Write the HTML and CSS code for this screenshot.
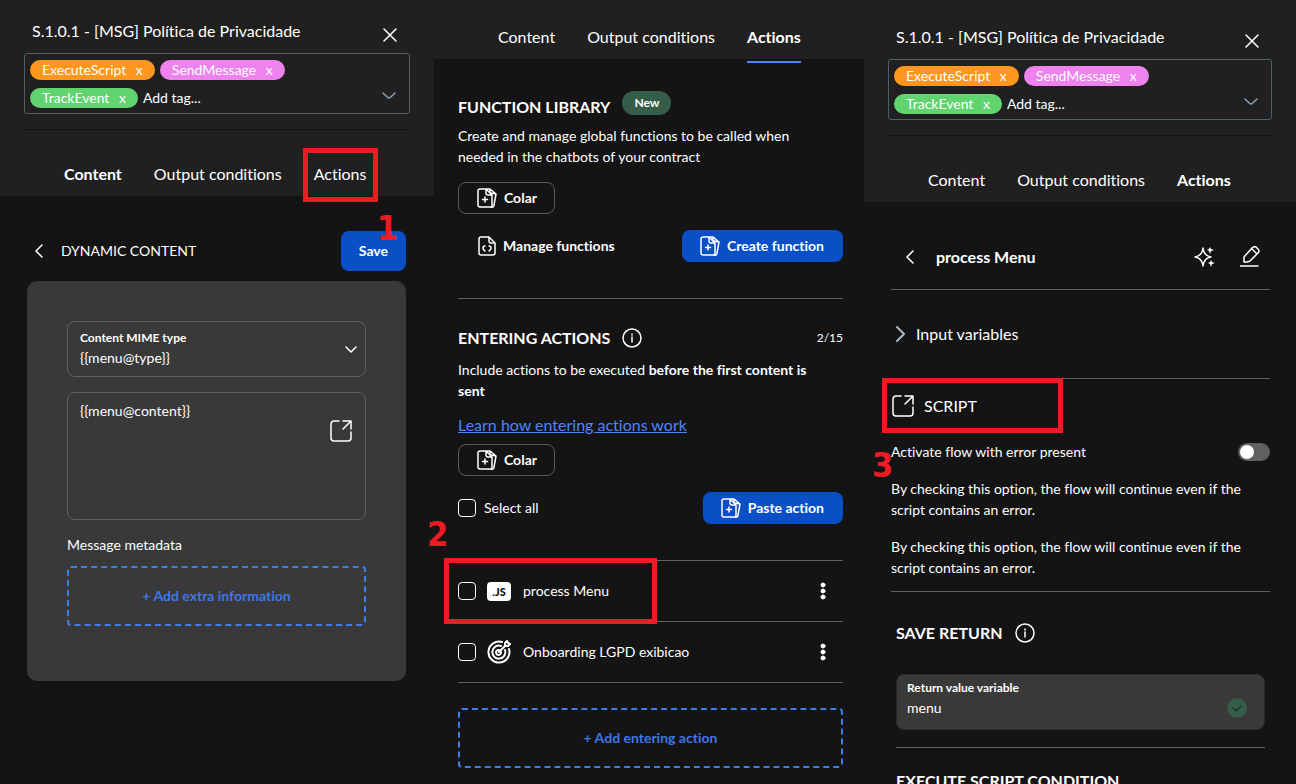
FILE: index.html
```
<!DOCTYPE html>
<html lang="en">
<head>
    <meta charset="UTF-8">
    <title>S.1.0.1 - [MSG] Política de Privacidade</title>
    <link rel="stylesheet" href="styles.css">
</head>
<body>
    <!-- Icons used on the page -->
    <svg class="sprite" aria-hidden="true">
        <symbol id="close" viewBox="0 0 14 14"><path d="M1 1l12 12M13 1L1 13"/></symbol>
        <symbol id="down" viewBox="0 0 14 8"><path d="M1 1q5 5 6 5t6-5"/></symbol>
        <symbol id="chevron" viewBox="0 0 12 8"><path d="M1 1l5 5 5-5"/></symbol>
        <symbol id="back" viewBox="0 0 8 14"><path d="M7 1L1 7l6 6"/></symbol>
        <symbol id="right" viewBox="0 0 10 16"><path d="M1 1l7 7-7 7"/></symbol>
        <symbol id="expand" viewBox="0 0 22 22"><path d="M9 1H4a3 3 0 0 0-3 3v14a3 3 0 0 0 3 3h14a3 3 0 0 0 3-3v-6M13 1h8v8M20 2l-7 7"/></symbol>
        <symbol id="paste" viewBox="0 0 20 20"><path d="M9 1H3a2 2 0 0 0-2 2v14a2 2 0 0 0 2 2h10a2 2 0 0 0 2-2V7L9 1v4a2 2 0 0 0 2 2h4M8 9v5M5.5 11.500h5M9 1h4l6 5-2 11a2 2 0 0 1-3 2M13 1v3a1 1 0 0 0 1 1l5 1"/></symbol>
        <symbol id="code-file" viewBox="0 0 18 20"><path d="M11 1H3a2 2 0 0 0-2 2v14a2 2 0 0 0 2 2h12a2 2 0 0 0 2-2V7zM11 1v4a2 2 0 0 0 2 2h4M7 10q-2 0-2 2t2 3M11 10q2 0 2 2t-2 3"/></symbol>
        <symbol id="info" viewBox="0 0 20 20"><circle cx="10" cy="10" r="9"/><path d="M10 9v5M10 6v1"/></symbol>
        <symbol id="target" viewBox="0 0 24 24"><path d="M15 2A10.500 10.500 0 1 0 22 9M14 6A6.500 6.500 0 1 0 18 10M12 10a2.500 2.500 0 1 0 2 2M12 12l6-6M18 6V3l2-2 1 2 2 1-2 2z"/></symbol>
        <symbol id="sparkle" viewBox="0 0 22 22"><path d="M9 2q1 8 8 9-7 1-8 9-1-8-8-9 7-1 8-9z"/><path class="fill" d="M16 1l1 2 3 1-3 1-1 3-1-3-2-1 2-1zM17 14l1 2 3 1-3 1-1 3-1-3-2-1 2-1z"/></symbol>
        <symbol id="edit" viewBox="0 0 20 21"><path d="M0 20h18M4 11l8-9q2-2 4-1l2 2q2 2 0 4l-8 8q-1 1-6 1 0-4 0-5zM12 3l5 5"/></symbol>
        <symbol id="dots" viewBox="0 0 6 18"><circle cx="3" cy="3" r="2"/><circle cx="3" cy="9" r="2"/><circle cx="3" cy="15" r="2"/></symbol>
    </svg>

    <div class="panels">
        <!-- Content -->
        <section class="panel">
            <header class="header">
                <div class="top">
                    <h1>S.1.0.1 - [MSG] Política de Privacidade</h1>
                    <button class="close" aria-label="Close"><svg width="14" height="14"><use href="#close"/></svg></button>
                </div>
                <div class="tags">
                    <span class="tag orange">ExecuteScript <button aria-label="Remove ExecuteScript">x</button></span>
                    <span class="tag pink">SendMessage <button aria-label="Remove SendMessage">x</button></span>
                    <span class="tag green">TrackEvent <button aria-label="Remove TrackEvent">x</button></span>
                    <input type="text" placeholder="Add tag..." aria-label="Add tag">
                    <svg class="caret" width="14" height="8"><use href="#down"/></svg>
                </div>
                <nav class="tabs line">
                    <a href="#" class="active">Content</a>
                    <a href="#">Output conditions</a>
                    <a href="#">Actions<span class="box box1"></span></a>
                </nav>
            </header>
            <div class="body1">
                <div class="row">
                    <button class="back" aria-label="Back"><svg width="8" height="14"><use href="#back"/></svg></button>
                    <h2 class="dynamic">DYNAMIC CONTENT</h2>
                    <button class="btn blue save">Save<span class="num num1">1</span></button>
                </div>
                <div class="card">
                    <div class="field">
                        <label for="mime">Content MIME type</label>
                        <select id="mime"><option>{{menu@type}}</option></select>
                        <svg class="arrow" width="12" height="8"><use href="#chevron"/></svg>
                    </div>
                    <div class="area">
                        <textarea aria-label="Content">{{menu@content}}</textarea>
                        <button class="expand" aria-label="Expand"><svg width="22" height="22"><use href="#expand"/></svg></button>
                    </div>
                    <p class="meta">Message metadata</p>
                    <button class="add">+ Add extra information</button>
                </div>
            </div>
        </section>

        <!-- Actions -->
        <section class="panel">
            <header class="header">
                <nav class="tabs short">
                    <a href="#">Content</a>
                    <a href="#">Output conditions</a>
                    <a href="#" class="active under">Actions</a>
                </nav>
            </header>
            <div class="body2">
                <div class="library">
                    <h2>FUNCTION LIBRARY</h2>
                    <span class="badge">New</span>
                </div>
                <p class="text">Create and manage global functions to be called when needed in the chatbots of your contract</p>
                <button class="btn outline colar"><svg width="20" height="20"><use href="#paste"/></svg>Colar</button>
                <div class="row buttons">
                    <button class="btn plain"><svg width="18" height="20"><use href="#code-file"/></svg>Manage functions</button>
                    <button class="btn blue"><svg width="20" height="20"><use href="#paste"/></svg>Create function</button>
                </div>
                <div class="entering">
                    <h2>ENTERING ACTIONS</h2>
                    <svg width="20" height="20"><use href="#info"/></svg>
                    <span class="count">2/15</span>
                </div>
                <p class="text include">Include actions to be executed <b>before the first content is sent</b></p>
                <a href="#" class="learn">Learn how entering actions work</a>
                <button class="btn outline"><svg width="20" height="20"><use href="#paste"/></svg>Colar</button>
                <div class="row buttons">
                    <label class="check"><input type="checkbox">Select all</label>
                    <button class="btn blue"><svg width="20" height="20"><use href="#paste"/></svg>Paste action</button>
                </div>
                <ul class="actions">
                    <li>
                        <input type="checkbox" id="action1">
                        <span class="js">.JS</span>
                        <label for="action1">process Menu</label>
                        <button class="more" aria-label="More"><svg width="6" height="18"><use href="#dots"/></svg></button>
                        <span class="box box2"></span>
                        <span class="num num2">2</span>
                    </li>
                    <li>
                        <input type="checkbox" id="action2">
                        <svg class="target" width="24" height="24"><use href="#target"/></svg>
                        <label for="action2">Onboarding LGPD exibicao</label>
                        <button class="more" aria-label="More"><svg width="6" height="18"><use href="#dots"/></svg></button>
                    </li>
                </ul>
                <button class="add">+ Add entering action</button>
            </div>
        </section>

        <!-- Script -->
        <section class="panel">
            <header class="header low">
                <div class="top">
                    <h1>S.1.0.1 - [MSG] Política de Privacidade</h1>
                    <button class="close" aria-label="Close"><svg width="14" height="14"><use href="#close"/></svg></button>
                </div>
                <div class="tags">
                    <span class="tag orange">ExecuteScript <button aria-label="Remove ExecuteScript">x</button></span>
                    <span class="tag pink">SendMessage <button aria-label="Remove SendMessage">x</button></span>
                    <span class="tag green">TrackEvent <button aria-label="Remove TrackEvent">x</button></span>
                    <input type="text" placeholder="Add tag..." aria-label="Add tag">
                    <svg class="caret" width="14" height="8"><use href="#down"/></svg>
                </div>
                <nav class="tabs line">
                    <a href="#">Content</a>
                    <a href="#">Output conditions</a>
                    <a href="#" class="active">Actions</a>
                </nav>
            </header>
            <div class="body3">
                <div class="process">
                    <button class="back" aria-label="Back"><svg width="8" height="14"><use href="#back"/></svg></button>
                    <h2>process Menu</h2>
                    <button aria-label="Suggest"><svg width="22" height="22"><use href="#sparkle"/></svg></button>
                    <button aria-label="Edit"><svg width="20" height="21"><use href="#edit"/></svg></button>
                </div>
                <button class="variables"><svg width="10" height="16"><use href="#right"/></svg>Input variables</button>
                <button class="script"><svg width="22" height="22"><use href="#expand"/></svg>SCRIPT<span class="box box3"></span></button>
                <div class="activate">
                    <label for="flow">Activate flow with error present</label>
                    <input type="checkbox" id="flow" class="toggle">
                    <span class="num num3">3</span>
                </div>
                <p class="text">By checking this option, the flow will continue even if the script contains an error.</p>
                <p class="text">By checking this option, the flow will continue even if the script contains an error.</p>
                <div class="return">
                    <div class="save-return">
                        <h2>SAVE RETURN</h2>
                        <svg width="20" height="20"><use href="#info"/></svg>
                    </div>
                    <div class="field filled">
                        <label for="variable">Return value variable</label>
                        <input type="text" id="variable" value="menu">
                        <svg class="ok" width="20" height="20" viewBox="0 0 20 20"><circle cx="10" cy="10" r="10"/><path d="M6 10l3 3 5-5"/></svg>
                    </div>
                    <h2 class="execute">EXECUTE SCRIPT CONDITION</h2>
                </div>
            </div>
        </section>
    </div>
</body>
</html>
```
FILE: styles.css
```
* {
    box-sizing: border-box;
}

body {
    margin: 0;
    background-color: #141414;
    color: #fff;
    font-family: Lato, "Liberation Sans", sans-serif;
    font-size: 14px;
    line-height: 20px;
    font-variant-ligatures: none;
}

h1, h2, p, ul {
    margin: 0;
    padding: 0;
}

h1, h2 {
    font-size: 16px;
    line-height: 22px;
}

h1 {
    font-weight: 400;
}

button, input, select, textarea {
    margin: 0;
    padding: 0;
    border: none;
    background: none;
    color: inherit;
    font: inherit;
    font-variant-ligatures: none;
}

button {
    cursor: pointer;
}

a {
    color: inherit;
    text-decoration: none;
}

svg {
    display: block;
    flex: none;
    fill: none;
    stroke: currentColor;
    stroke-width: 1.5;
    stroke-linecap: round;
    stroke-linejoin: round;
}

.sprite {
    position: absolute;
    width: 0;
    height: 0;
}

.fill, #dots {
    fill: currentColor;
    stroke-width: 1;
}

.fill {
    stroke: none;
}

.panels {
    display: grid;
    grid-template-columns: 434fr 430fr 432fr;
    height: 100vh;
    overflow: hidden;
}

.panel {
    min-width: 0;
}

/* Header */
.header {
    padding: 20px 24px 0;
    background-color: #202020;
}

.header.low {
    padding-top: 26px;
}

.top {
    display: flex;
    justify-content: space-between;
    height: 33px;
    padding: 0 13px 0 8px;
}

.close {
    height: 14px;
    margin-top: 8px;
}

.tags {
    position: relative;
    display: flex;
    flex-wrap: wrap;
    gap: 8px 5px;
    padding: 6px 40px 5px 5px;
    border: 1px solid #505e66;
    border-radius: 3px;
}

.tags input {
    width: 100px;
    height: 20px;
}

.tags input::placeholder {
    color: #fff;
    opacity: 1;
}

.tag {
    height: 20px;
    padding: 0 12px;
    border-radius: 10px;
}

.tag button {
    margin-left: 6px;
}

.orange { background-color: #ff961e; }
.pink { background-color: #ee82ee; }
.green { background-color: #61d36f; }

.caret {
    position: absolute;
    right: 13px;
    bottom: 13px;
    color: #8ca0b3;
}

.tabs {
    display: flex;
    gap: 32px;
    padding: 33px 0 11px 40px;
    font-size: 16px;
    line-height: 22px;
}

.tabs.line {
    margin-top: 15px;
    border-top: 1px solid #141414;
}

.tabs.short {
    padding-top: 6px;
}

.tabs a {
    position: relative;
}

.active {
    font-weight: 700;
}

.under::after {
    content: "";
    position: absolute;
    left: 0;
    right: 0;
    bottom: -15px;
    height: 2px;
    background-color: #4c86f9;
}

/* Buttons */
.row {
    display: flex;
    align-items: center;
    justify-content: space-between;
}

.btn {
    display: flex;
    align-items: center;
    gap: 7px;
    height: 32px;
    padding: 0 17px 0 18px;
    border-radius: 8px;
    font-weight: 700;
}

.blue {
    padding-right: 19px;
    background-color: #0a4fc6;
}

.outline {
    border: 1px solid #505e66;
}

.plain {
    padding-left: 20px;
}

.buttons {
    margin-top: 16px;
}

.add {
    width: 100%;
    height: 60px;
    border: 2px dashed #3f7de8;
    border-radius: 4px;
    color: #3f76e8;
    font-weight: 700;
}

/* Content panel */
.body1 {
    padding: 35px 28px 0 27px;
}

.back {
    padding: 0 8px;
}

.dynamic {
    flex: 1;
    margin-left: 10px;
    font-size: 14px;
    font-weight: 400;
}

.save {
    position: relative;
    height: 40px;
    padding: 0 18px;
}

.card {
    margin-top: 10px;
    padding: 40px 40px 55px;
    border-radius: 10px;
    background-color: #393939;
}

.field {
    position: relative;
    height: 56px;
    padding: 6px 12px;
    border: 1px solid #616161;
    border-radius: 8px;
}

.field label {
    display: block;
    font-size: 12px;
    font-weight: 700;
}

.field select, .field input {
    display: block;
    width: 100%;
    height: 20px;
    appearance: none;
}

.arrow {
    position: absolute;
    right: 8px;
    top: 24px;
    pointer-events: none;
}

.area {
    position: relative;
    margin-top: 15px;
}

.area textarea {
    display: block;
    width: 100%;
    height: 128px;
    padding: 8px 12px;
    border: 1px solid #616161;
    border-radius: 8px;
    resize: none;
}

.expand {
    position: absolute;
    top: 28px;
    right: 14px;
}

.meta {
    margin: 15px 0 11px;
}

/* Actions panel */
.body2 {
    padding: 32px 21px 0 24px;
}

.library {
    display: flex;
    gap: 12px;
}

.library h2 {
    margin-top: 5px;
}

.badge {
    height: 24px;
    padding: 2px 12px;
    border-radius: 12px;
    background-color: #355e4a;
    font-size: 12px;
    font-weight: 700;
}

.text {
    padding-right: 16px;
    line-height: 21px;
}

.library + .text {
    margin: 7px 0 15px;
}

.entering {
    display: flex;
    align-items: center;
    gap: 12px;
    margin-top: 36px;
    padding-top: 28px;
    border-top: 1px solid #616161;
}

.count {
    margin-left: auto;
    font-size: 12px;
}

.include {
    margin: 10px 0 13px;
}

.learn {
    display: block;
    margin-bottom: 8px;
    color: #4c86f9;
    font-size: 16px;
    line-height: 22px;
    text-decoration: underline;
}

.check {
    display: flex;
    align-items: center;
    gap: 8px;
}

.check input, .actions input {
    width: 18px;
    height: 18px;
    border: 1px solid #fff;
    border-radius: 4px;
    appearance: none;
}

.actions {
    margin: 36px 0 25px;
    border-top: 1px solid #616161;
    list-style: none;
}

.actions li {
    position: relative;
    display: flex;
    align-items: center;
    height: 61px;
    border-bottom: 1px solid #616161;
}

.actions input {
    margin-right: 11px;
}

.actions label {
    flex: 1;
    margin-left: 12px;
}

.js {
    width: 24px;
    height: 19px;
    border-radius: 4px;
    background-color: #fff;
    color: #141414;
    font-size: 11px;
    font-weight: 900;
    line-height: 19px;
    text-align: center;
}

.target {
    stroke-width: 2;
}

.more {
    margin-right: 17px;
}

/* Script panel */
.body3 {
    padding: 0 26px 0 27px;
}

.process {
    display: flex;
    align-items: center;
    gap: 24px;
    height: 88px;
    padding: 22px 10px 0 7px;
    border-bottom: 1px solid #616161;
}

.process h2 {
    flex: 1;
    margin-left: -10px;
}

.variables, .script {
    display: flex;
    align-items: center;
    gap: 10px;
    width: 100%;
    font-size: 16px;
}

.variables {
    height: 89px;
    padding-left: 5px;
    border-bottom: 1px solid #616161;
}

.variables svg {
    color: #a5b9c6;
    stroke-width: 2;
}

.script {
    position: relative;
    height: 54px;
    padding-left: 1px;
}

.activate {
    position: relative;
    display: flex;
    align-items: center;
    justify-content: space-between;
    margin-top: 9px;
}

.toggle {
    width: 32px;
    height: 18px;
    padding: 2px;
    border-radius: 9px;
    background-color: #616161;
    appearance: none;
}

.toggle::before {
    content: "";
    display: block;
    width: 14px;
    height: 14px;
    border-radius: 50%;
    background-color: #fff;
}

.body3 .text {
    margin-top: 16px;
}

.return {
    margin-top: 13px;
    border-top: 1px solid #616161;
    padding: 30px 5px 0;
}

.save-return {
    display: flex;
    align-items: center;
    gap: 12px;
}

.filled {
    margin: 30px 0 17px;
    padding: 3px 10px;
    border-color: #2a2a2a;
    background-color: #393939;
}

.ok {
    position: absolute;
    right: 17px;
    bottom: 11px;
    color: #1f3529;
}

.ok circle {
    fill: #355e4a;
    stroke: none;
}

.execute {
    padding-top: 22px;
    border-top: 1px solid #616161;
}

/* Red step marks */
.box {
    position: absolute;
    border: 5px solid #ed1c24;
    pointer-events: none;
}

.box1 {
    inset: -15px -12px -17px -11px;
}

.box2 {
    top: -3px;
    bottom: -3px;
    left: -14px;
    width: 213px;
}

.box3 {
    top: -1px;
    bottom: 0;
    left: -9px;
    width: 181px;
}

.num {
    position: absolute;
    color: #ed1c24;
    font-family: "DejaVu Sans Condensed", "DejaVu Sans", sans-serif;
    font-size: 34px;
    font-weight: 700;
    line-height: 34px;
    pointer-events: none;
}

.num1 {
    top: -20px;
    right: 8px;
}

.num2 {
    top: -44px;
    left: -31px;
}

.num3 {
    top: 6px;
    left: -19px;
}
```
